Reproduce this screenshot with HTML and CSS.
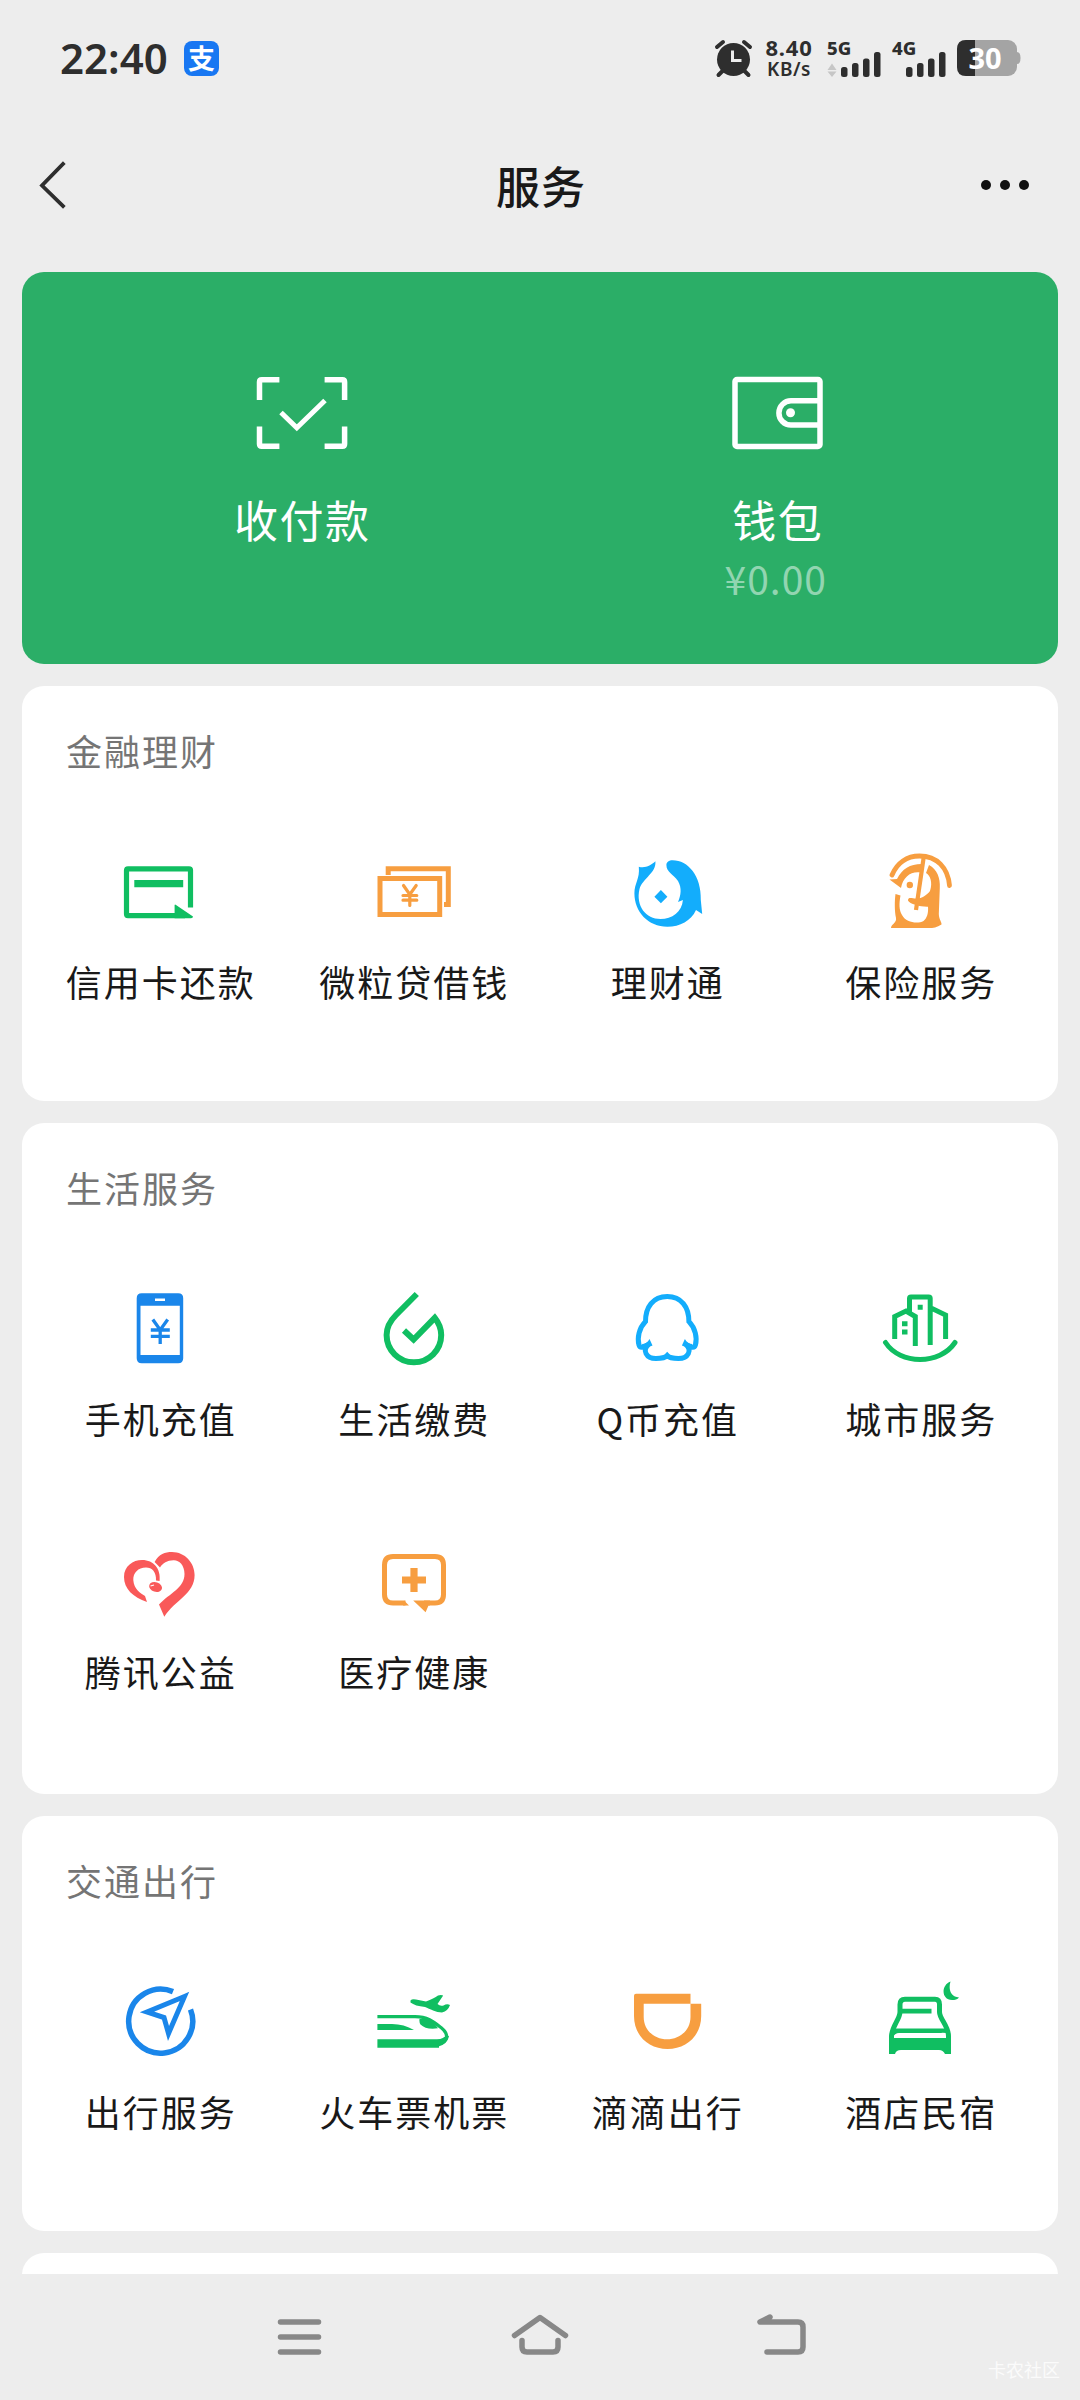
FILE: index.html
```html
<!DOCTYPE html>
<html lang="zh-CN">
<head>
<meta charset="utf-8">
<title>服务</title>
<link rel="stylesheet" href="styles.css">
</head>
<body>
<div class="screen">
  <header class="status">
    <span class="clock">22:40</span>
    <span class="app-badge">支</span>
    <svg class="alarm" viewBox="0 0 37 37" width="37" height="37">
      <circle cx="18.500" cy="19.500" r="16.500" fill="#2e2e2e"/>
      <path d="M2 7 L8 2 M35 7 L29 2 M3.500 35 L8 30.500 M33.500 35 L29 30.500" stroke="#2e2e2e" stroke-width="4" stroke-linecap="round"/>
      <path d="M17.500 10.500 V20.500 H26.500" fill="none" stroke="#ededed" stroke-width="3"/>
    </svg>
    <div class="speed"><b class="rate">8.40</b><b class="unit">KB/s</b></div>
    <svg class="signal" viewBox="0 0 120 40" width="120" height="40">
      <g class="net" fill="#2e2e2e"><text x="0" y="16.500">5G</text><text x="65" y="16.500">4G</text></g>
      <path d="M0.500 32 L5 25.500 L9.500 32 Z M0.500 33.500 L5 39 L9.500 33.500 Z" fill="#c6c6c6"/>
      <g fill="#2e2e2e">
        <rect x="14" y="29" width="6.500" height="10" rx="2.500"/><rect x="25" y="25" width="6.500" height="14" rx="2.500"/><rect x="36" y="20.500" width="6.500" height="18.500" rx="2.500"/><rect x="47" y="14" width="6.500" height="25" rx="2.500"/>
        <rect x="79" y="29" width="6.500" height="10" rx="2.500"/><rect x="90" y="25" width="6.500" height="14" rx="2.500"/><rect x="101" y="20.500" width="6.500" height="18.500" rx="2.500"/><rect x="112" y="14" width="6.500" height="25" rx="2.500"/>
      </g>
    </svg>
    <svg class="battery" viewBox="0 0 64 36" width="64" height="36">
      <rect x="0" y="0" width="60" height="36" rx="9" fill="#a4a4a4"/>
      <path d="M60 12 Q63.500 12 63.500 18 Q63.500 24 60 24 Z" fill="#a4a4a4"/>
      <path d="M9 0 H18 V36 H9 Q0 36 0 27 V9 Q0 0 9 0 Z" fill="#2e2e2e"/>
      <text x="11.500" y="28.700" fill="#fff">30</text>
    </svg>
  </header>

  <nav class="titlebar">
    <svg viewBox="0 0 28 48" width="28" height="48"><path d="M25 3 L4 24.500 L25 45" fill="none" stroke="#2e2e2e" stroke-width="3.800" stroke-linecap="square"/></svg>
    <h1>服务</h1>
    <svg viewBox="0 0 50 12" width="50" height="12" fill="#111"><circle cx="6" cy="6" r="5"/><circle cx="25" cy="6" r="5"/><circle cx="44" cy="6" r="5"/></svg>
  </nav>

  <main>
    <section class="pay">
      <div class="pay-item">
        <svg viewBox="0 0 100 80" width="100" height="80" fill="none" stroke="#fff" stroke-width="5.500">
          <path d="M7.500 27 V9 Q7.500 6.700 9.800 6.700 H27.400 M72.600 6.700 H90.300 Q92.600 6.700 92.600 9 V27 M7.500 53.500 V71 Q7.500 73.300 9.800 73.300 H27.400 M72.600 73.300 H90.300 Q92.600 73.300 92.600 71 V53.500"/>
          <path d="M29 39.500 L44.800 54.800 L73 27.500" stroke-width="5"/>
        </svg>
        <span class="pay-label">收付款</span>
      </div>
      <div class="pay-item">
        <svg viewBox="0 0 100 80" width="100" height="80" fill="none" stroke="#fff" stroke-width="5.500">
          <rect x="7" y="6.500" width="85" height="67" rx="2"/>
          <path d="M91 27.800 H63 A12 12 0 0 0 63 52 H91"/>
          <circle cx="62.500" cy="39.700" r="4.500" fill="#fff" stroke="none"/>
        </svg>
        <span class="pay-label">钱包</span>
        <span class="balance">¥0.00</span>
      </div>
    </section>

    <section class="card">
      <h2>金融理财</h2>
      <div class="grid">
        <div class="item">
          <svg class="icon green" viewBox="0 0 90 90">
            <path class="line" d="M75.500 61.500 V24 Q75.500 22.800 74 22.800 H13 Q11.500 22.800 11.500 24.500 V68 Q11.500 69.600 13 69.600 H70" stroke-width="5.200"/>
            <path d="M19.300 34 H68.200 V41.300 H19.300 Z M59.600 59 Q60 58 61 59 L78 70.500 Q78 72 76 72.200 H59.600 Z"/>
          </svg>
          <span>信用卡还款</span>
        </div>
        <div class="item">
          <svg class="icon orange" viewBox="0 0 90 90">
            <g class="line"><path d="M12 32.600 H71.700 V68.500 H12 Z M20.200 29 V22.800 H80.300 V58.500 H76" stroke-width="5"/>
            <path d="M35.500 39.500 L41.800 48.500 L48.200 39.500 M41.800 48 V59.500 M35 49.500 H48.800 M35 54.200 H48.800" stroke-width="3.200" stroke-linecap="round"/></g>
          </svg>
          <span>微粒贷借钱</span>
        </div>
        <div class="item">
          <svg class="icon sky" viewBox="0 0 90 90">
            <path d="M33.400 15.300 C34.500 27 21 32 17.500 43 C13.500 60 24 73 38.500 73 C50 73 60 66 60.900 54 L56 56 C59 49 60 42 56 35 C51 28 44.400 26 44.400 19 C44.400 16 47 14.300 50.600 14.300 C66 14.300 79.500 30 78.800 54 L80.200 68 L74 64 C69 75 58 80.700 45.400 80.700 C26 80.700 12.400 66 12.400 47.300 C12.400 37 18 33 16.800 20.700 C23 22.500 29 19.500 33.400 15.300 Z M38.900 44 L45.400 50.700 L38.900 57.200 L32.400 50.700 Z"/>
          </svg>
          <span>理财通</span>
        </div>
        <div class="item">
          <svg class="icon orange" viewBox="0 0 90 90">
            <g class="line"><path d="M17 29 C22 17 32 10 44.500 10 C62 10 73 22 74.500 39.500" stroke-width="4.800" stroke-linecap="round"/><path d="M48.600 12 L41 64" stroke-width="4.200"/></g>
            <path d="M14.500 33.500 L22 33 C27 23 35 18 46.500 18 L45.500 26.500 C36 25 28 31 26 42 Z"/>
            <circle cx="34.800" cy="39" r="3.200"/>
            <path d="M54 19 C62 23 65.500 32 64.800 42 L63.800 68 C64 74 67 76 66.500 78.500 C62 81.500 58 82 54 82 H16 C16 78 22 77 21 72 C19.500 65 19.500 55 20.500 48 L25.500 49.500 C24 58 24 64 27 69 C31 77 43 78 48.500 75 C52 72 53.500 67 53 60.700 C46 61 34.500 58 33 54.500 C33 50.500 37 52.500 41 52.500 C46 53 52 49 55 45 C58 36 55 29 51 27 Z"/>
          </svg>
          <span>保险服务</span>
        </div>
      </div>
    </section>

    <section class="card card-tall">
      <h2>生活服务</h2>
      <div class="grid">
        <div class="item">
          <svg class="icon blue" viewBox="0 0 90 90">
            <path fill-rule="evenodd" d="M26.700 10.300 H63.200 Q68.200 10.300 68.200 15.300 V75.300 Q68.200 80.300 63.200 80.300 H26.700 Q21.700 80.300 21.700 75.300 V15.300 Q21.700 10.300 26.700 10.300 Z M25.500 22.700 V72 H64.800 V22.700 Z M40 15.500 V18 H50 V15.500 Z"/>
            <path class="line" d="M37.800 36.500 L45.200 47 L52.700 36.500 M45.200 46 V61 M35.800 47 H54.800 M35.800 53.300 H54.800" stroke-width="3.300"/>
          </svg>
          <span>手机充值</span>
        </div>
        <div class="item">
          <svg class="icon green" viewBox="0 0 90 90"><path class="line" d="M48.800 11 L28 32 C22 38 18.600 44 18.600 52 A27.300 27.300 0 0 0 73.200 52 C73.200 46 71 40 66.800 34.800 L45.600 56.500 L36 47.500" stroke-width="6"/></svg>
          <span>生活缴费</span>
        </div>
        <div class="item">
          <svg class="icon sky" viewBox="0 0 90 90">
            <path class="line" d="M45.200 13.500 C31 13.500 23.500 24 23.500 38.500 C17 45 15 55 17 62 C18 65.500 21 64.500 26.500 61.500 C20 67 24 75.500 34 75.500 C39 75.500 43 75 45.200 72.500 C47.400 75 51.400 75.500 56.400 75.500 C66.400 75.500 70.400 67 63.900 61.500 C69.400 64.500 72.400 65.500 73.400 62 C75.400 55 73.400 45 66.900 38.500 C66.900 24 59.400 13.500 45.200 13.500 Z" stroke-width="5"/>
            <path d="M27.500 56 L30.500 62.500 L22 66 L20 61 Q25 61 27.500 56 Z M62.900 56 L59.900 62.500 L68.400 66 L70.400 61 Q65.400 61 62.900 56 Z"/>
          </svg>
          <span>Q币充值</span>
        </div>
        <div class="item">
          <svg class="icon green" viewBox="0 0 90 90">
            <g class="line" stroke-width="5"><path d="M10.500 59.500 C25 82 65 82 80 59.500" stroke-linecap="round"/><path d="M34.500 30 V15.500 Q34.500 14 36 14 H53.700 Q55.200 14 55.200 15.500 V62 M19.700 56 V33.500 L31 28 L40.300 33.500 V63 M56 25 L70.600 32 V56"/></g>
            <path d="M42.700 21.800 h5 v5 h-5 Z M27 38.300 h5.500 v5 h-5.500 Z M27 46.600 h5.500 v5 h-5.500 Z"/>
          </svg>
          <span>城市服务</span>
        </div>
        <div class="item">
          <svg class="icon red" viewBox="0 0 90 90">
            <path d="M32 66 C18 61 9 53 9 41 C9 30 18 24 27 24 C39 24 46 33 44.600 45 L41 44.500 C41.500 36 37 31.500 31 31.500 C23 31.500 18 37 18.300 44 C19 53 25 57 30 60 Z M39.600 26 C44 18 50 16 57 16 C70 16 79.600 27 79.600 39 C79.600 58 60 64 49.300 80.700 L44 68.500 C55 57 69.500 52 69.500 38 C69.500 29 64 24 58.500 24.300 C52 24.500 48 27 45 31.500 Z"/>
            <ellipse cx="40.600" cy="51" rx="6.600" ry="4.800" transform="rotate(18 40.600 51)"/>
            <path d="M35.500 50 L39 49" stroke="#fff" stroke-width="1.200"/>
          </svg>
          <span>腾讯公益</span>
        </div>
        <div class="item">
          <svg class="icon orange" viewBox="0 0 90 90">
            <path class="line" d="M37.500 67 H25 Q16.500 67 16.500 58.500 V29 Q16.500 20.500 25 20.500 H67 Q75.500 20.500 75.500 29 V58.500 Q75.500 67 67 67 H56" stroke-width="5"/>
            <path d="M36 64.500 L41 69.500 H35 Z M45.200 64.600 H62 V69.500 H60.500 L57.600 76.300 Z M42.400 32 h7.200 v8.400 h8.400 v7.200 h-8.400 v8.400 h-7.200 v-8.400 h-8.400 v-7.200 h8.400 Z"/>
          </svg>
          <span>医疗健康</span>
        </div>
      </div>
    </section>

    <section class="card">
      <h2>交通出行</h2>
      <div class="grid">
        <div class="item">
          <svg class="icon blue" viewBox="0 0 90 90"><g class="line"><path d="M58 15.600 A32 32 0 1 0 75.500 33.500" stroke-width="5.500"/><path d="M69.500 20.500 L32 36 L49 41.500 L53.500 57.500 Z" stroke-width="5" stroke-linejoin="miter"/></g></svg>
          <span>出行服务</span>
        </div>
        <div class="item">
          <svg class="icon green" viewBox="0 0 90 90">
            <path d="M42.500 24.500 Q44 22.500 48 23.500 L58 25.500 Q66 22.500 70 19.500 Q73 18.500 75.200 19.500 L69.500 28 Q72 30.500 75.500 29.500 Q79 27.500 82 29 Q80 35 74 36.500 C68 36.500 62 33 57 31 Q47 30 42.500 26.500 Z"/>
            <path d="M9.400 48 H24 Q36 48 46 54 H9.400 Z M9.400 63.300 H69 Q76 63 78 59 L81 60 Q80 67 71 69.500 L71 71.700 H9.400 Z M51.500 43 H60 Q66 46 70 52.300 Q58 54 52.500 48.500 Q51 46 51.500 43 Z"/>
            <path class="line" d="M9.400 40.700 H47 C60 40.700 66 46 73 51.500 C80 57 82 65 70 69" stroke-width="3.200"/>
          </svg>
          <span>火车票机票</span>
        </div>
        <div class="item">
          <svg class="icon orange" viewBox="0 0 90 90"><path fill-rule="evenodd" d="M12 19.700 Q12 17.700 14 17.700 H68.500 V27.700 H79.200 V40 C79.200 60 64 73 45.600 73 C27 73 12 60 12 40 Z M21.700 27.700 V41 C21.700 54 32 63.300 45 63.300 C58 63.300 68.500 54 68.500 41 V27.700 Z"/></svg>
          <span>滴滴出行</span>
        </div>
        <div class="item">
          <svg class="icon green" viewBox="0 0 90 90">
            <path d="M75.500 5.500 C66 9 66 24 77 24 C80 24 82.500 23.500 84 21.500 C76 21 73 14 75.500 5.500 Z M26 32.700 H56.500 V37.500 H26 Z M19 52.500 H71 V57 Q67 56.500 66 57 H24 Q20 57 17 62 H73 V78 H70 Q68 74 64 74 H26 Q21 74 20 78 H15 V58 Z"/>
            <path class="line" d="M16.500 78 V60 C17 50 25 43 25 36 V28.500 Q25 23.200 30 23.200 H60 Q64.500 23.200 64.500 28.500 V36 C64.500 43 73.500 50 73.500 60 V78" stroke-width="5"/>
          </svg>
          <span>酒店民宿</span>
        </div>
      </div>
    </section>

    <section class="card"></section>
  </main>

  <footer class="sysnav">
    <svg viewBox="0 0 48 44" width="48" height="44"><path d="M4.500 8 H42.500 M4.500 23 H42.500 M4.500 38 H42.500"/></svg>
    <svg viewBox="0 0 56 44" width="56" height="44"><path d="M2.500 21.500 L28 3.500 L53.500 21.500 M10 26.500 V33 Q10 38 15 38 H41 Q46 38 46 33 V26.500"/></svg>
    <svg viewBox="0 0 52 44" width="52" height="44"><path d="M14 3 L4 8 H42 Q47 8 47 13 V33 Q47 38 42 38 H11"/></svg>
    <span class="watermark">卡农社区</span>
  </footer>
</div>
</body>
</html>
```
FILE: styles.css
```css
* { box-sizing: border-box; }

body {
  margin: 0;
  background: #ededed;
  font-family: "Noto Sans CJK SC", sans-serif;
  color: #191919;
}

svg { display: block; flex: none; overflow: visible; }

.screen {
  width: 1080px;
  height: 2400px;
  display: flex;
  flex-direction: column;
  overflow: hidden;
}

/* Status bar */
.status {
  height: 116px;
  flex: none;
  display: flex;
  align-items: center;
  padding-left: 60px;
  color: #2e2e2e;
  font-family: "Noto Sans", sans-serif;
}

.clock {
  width: 124px;
  font-size: 42px;
  font-weight: 600;
  line-height: 50px;
}

.app-badge {
  width: 35px;
  height: 35px;
  border-radius: 8px;
  background: #1877f2;
  color: #fff;
  font: bold 27px/34px "Noto Sans CJK SC", sans-serif;
  text-align: center;
}

.alarm { margin-left: 496px; }

.speed {
  width: 58px;
  margin-left: 8px;
  display: flex;
  flex-direction: column;
  align-items: center;
}

.rate { font-size: 22px; line-height: 22px; letter-spacing: 0.8px; }
.unit { font-size: 19px; font-weight: 600; line-height: 22px; letter-spacing: 0.5px; }

.signal { margin-left: 9px; }
.signal text { font: 800 18.500px "Noto Sans", sans-serif; }
.battery { margin-left: 10px; }
.battery text { font: 700 29px "Noto Sans", sans-serif; }

/* Page title */
.titlebar {
  height: 138px;
  flex: none;
  display: flex;
  justify-content: space-between;
  align-items: center;
  padding: 0 50px 0 38px;
}

.titlebar h1 {
  margin: 0 0 0 36px;
  font-size: 44px;
  font-weight: 500;
  letter-spacing: 1px;
  line-height: 60px;
}

main {
  height: 2020px;
  flex: none;
  padding: 18px 22px 0;
  display: flex;
  flex-direction: column;
  gap: 22px;
  overflow: hidden;
}

/* Payment and wallet panel */
.pay {
  height: 392px;
  flex: none;
  padding: 101px 42.500px 0;
  display: flex;
  border-radius: 22px;
  background: #2bae67;
  color: #fff;
}

.pay-item {
  flex: 1;
  display: flex;
  flex-direction: column;
  align-items: center;
}

.pay-label {
  margin-top: 36px;
  font-size: 44px;
  line-height: 60px;
  letter-spacing: 1.500px;
}

.balance {
  margin: 4px 4px 0 0;
  font-size: 39px;
  line-height: 50px;
  letter-spacing: 1px;
  color: #92d5b1;
}

/* Service groups */
.card {
  flex: none;
  min-height: 200px;
  padding: 0 11px 64px;
  border-radius: 22px;
  background: #fff;
}

.card-tall { padding-bottom: 67px; }

.card h2 {
  margin: 0;
  padding: 39px 0 0 33px;
  font-size: 36px;
  font-weight: 400;
  line-height: 50px;
  letter-spacing: 2px;
  color: #757575;
}

.grid {
  display: grid;
  grid-template-columns: repeat(4, 1fr);
  row-gap: 62px;
  padding-top: 71px;
}

.item {
  height: 191px;
  display: flex;
  flex-direction: column;
  align-items: center;
}

.item span {
  margin: 20px -2px 0 0;
  font-size: 36px;
  line-height: 50px;
  letter-spacing: 2px;
  white-space: nowrap;
}

.icon { width: 90px; height: 90px; fill: currentColor; }
.icon .line { fill: none; stroke: currentColor; }
.green { color: #10be61; }
.orange { color: #f79e40; }
.sky { color: #13adfc; }
.blue { color: #1a86ea; }
.red { color: #f95959; }

/* System navigation */
.sysnav {
  position: relative;
  flex: 1;
  display: flex;
  justify-content: center;
  gap: 188px;
  padding: 40px 0 0 4px;
}

.sysnav path {
  fill: none;
  stroke: #888;
  stroke-width: 5.500;
  stroke-linecap: round;
  stroke-linejoin: round;
}

.watermark {
  position: absolute;
  right: 20px;
  bottom: 18px;
  font-size: 18px;
  line-height: 26px;
  color: #fbfbfb;
}
```
